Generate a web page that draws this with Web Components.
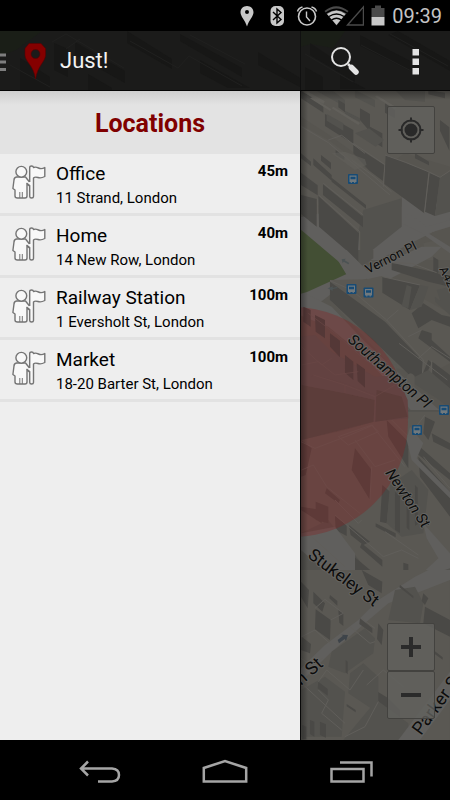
<!DOCTYPE html>
<html lang="en">
<head>
<meta charset="utf-8">
<meta name="viewport" content="width=device-width, initial-scale=1">
<title>Just!</title>
<style>
    body {
        margin: 0;
        background: #000;
        color: #000;
        font-family: Roboto, "Noto Sans", sans-serif;
    }
</style>
</head>
<body>
<just-app></just-app>

<script>
class StatusBar extends HTMLElement {
    constructor() {
        super();
        this.attachShadow({ mode: "open" });
    }

    connectedCallback() {
        this.shadowRoot.innerHTML = `
            <style>
                :host {
                    display: flex;
                    justify-content: flex-end;
                    align-items: center;
                    gap: 6px;
                    height: 31px;
                    padding-right: 8px;
                    background: #000;
                    color: #c4c4c4;
                    font-size: 20px;
                    line-height: 32px;
                }
                svg { flex: none; }
            </style>
            <svg width="24" height="24" viewBox="0 0 24 24"><path fill="#c8c8c8" fill-rule="evenodd" d="M13 2C9.200 2 6.500 4.800 6.500 8.300C6.500 12.500 11 16 13 22.500C15 16 19.500 12.500 19.500 8.300C19.500 4.800 16.800 2 13 2ZM13 6a2 2 0 1 1 0 4a2 2 0 0 1 0-4Z"/></svg>
            <svg width="24" height="24" viewBox="0 0 24 24"><rect x="6.500" y="2" width="13.500" height="20" rx="5" fill="#c8c8c8"/><path fill="none" stroke="#000" stroke-width="1.400" d="M9 8l8 7.500l-4 3.500V5l4 3.500L9 16"/></svg>
            <svg width="24" height="24" viewBox="0 0 24 24"><g fill="none" stroke="#c8c8c8" stroke-width="1.600"><circle cx="13" cy="12.500" r="8.500"/><path d="M12.500 7.500v5.500l3.500 4" stroke-width="1.400"/><path d="M3.500 7.500Q4.500 4 8.500 3M22.500 7.500Q21.500 4 17.500 3" stroke-width="1.500"/></g></svg>
            <svg width="40" height="24" viewBox="0 0 40 24"><path fill="#4a4a4a" d="M.5 7Q12-2.500 24.500 7L12.500 21.500Z"/><path fill="#c8c8c8" d="M3 10Q12.500 3 21.500 10L12.500 21Z"/><path fill="none" stroke="#000" stroke-width="1.400" d="M2 9Q12.500 1.500 23 9M5 12.500Q12.500 7.500 20 12.500M7.500 16Q12.500 12.500 17.500 16"/><path fill="#000" fill-opacity=".6" stroke="#4a4a4a" stroke-width="1.300" d="M23.500 21L39.400 3V21Z"/></svg>
            <svg width="16" height="24" viewBox="0 0 16 24"><path fill="#4a4a4a" d="M5 1.500h6v2.500h3.500v9H1.500V4H5Z"/><path fill="#c8c8c8" d="M1.500 13h13v8.500h-13Z"/></svg>
            <time>09:39</time>
        `;
    }
}
customElements.define("status-bar", StatusBar);


class ActionBar extends HTMLElement {
    constructor() {
        super();
        this.attachShadow({ mode: "open" });
    }

    connectedCallback() {
        this.shadowRoot.innerHTML = `
            <style>
                :host {
                    display: grid;
                    height: 60px;
                    background: #1b1b1a;
                    color: #f3f3f3;
                }
                .backdrop, .bar { grid-area: 1 / 1; }
                .backdrop {
                    width: 100%;
                    height: 60px;
                    min-width: 0;
                }
                .bar {
                    display: flex;
                    align-items: center;
                    gap: 23px;
                    padding-right: 10px;
                    box-sizing: border-box;
                    border-bottom: 1px solid #050505;
                }
                button {
                    display: flex;
                    align-items: center;
                    justify-content: center;
                    width: 48px;
                    height: 48px;
                    padding: 0;
                    border: 0;
                    background: none;
                    color: inherit;
                    font: inherit;
                }
                .home {
                    flex: 1;
                    justify-content: flex-start;
                    gap: 12px;
                    font-size: 22px;
                    line-height: 28px;
                }
            </style>
            <svg class="backdrop" viewBox="0 31 450 60" preserveAspectRatio="xMidYMid slice" aria-hidden="true">
                <path fill="#1a1f16" d="M0 31h42L16 50L0 56ZM300 31h45l-12 17l-22-4l-11 3Z" opacity=".8"/>
                <g fill="#171716">
                    <path d="M54 43l14 6v28l-14-7ZM75 42l50 29v12l-50-28ZM127 31l45 28v10l-45-26ZM180 34l62 34v9l-62-36ZM200 60l50 28h-22l-28-15ZM258 52l42 26v9l-42-22ZM20 58l30 19v13H20ZM88 74l24 14v3H88Z"/>
                    <path d="M310 43l45 30v9l-45-27ZM360 35l60 31v10l-60-30ZM340 75l26 14h-26ZM398 31l52 30v10l-62-36ZM305 67l18 10v14h-18Z"/>
                </g>
                <path fill="none" stroke="#20201f" d="M52 42l14-8l58 34M66 49l14-10M130 41l48 27l11-12l53 30M190 35l55 29M305 54l48 28M361 45l56 29M390 34l58 32M10 65l40 22"/>
                <path d="M300.500 31v60" stroke="#101010"/>
            </svg>
            <div class="bar">
                <button class="home">
                    <svg width="48" height="40" viewBox="0 0 48 40"><path fill="#7e7e7e" d="M0 12.500h6v3H0zM0 19.500h6v3H0zM0 27h6v3H0z"/><path fill="#850000" stroke="#5c0000" stroke-width=".6" fill-rule="evenodd" d="M29 2.500h12l4.500 5v7C45 21 37.500 25 35.500 38C34 25 25.500 21 25 14.500V7.500ZM35.500 8.500a4.500 4.500 0 1 0 0 9a4.500 4.500 0 0 0 0-9Z"/></svg>
                    <span>Just!</span>
                </button>
                <button aria-label="Search">
                    <svg width="30" height="30" viewBox="0 0 30 30"><circle cx="11" cy="11" r="9" fill="none" stroke="#e4e4e4" stroke-width="2"/><path d="M18 18l3 3" stroke="#e4e4e4" stroke-width="2.500"/><path d="M21.500 21.500l4.500 4.500" stroke="#e4e4e4" stroke-width="5.500" stroke-linecap="round"/></svg>
                </button>
                <button aria-label="More options">
                    <svg width="8" height="28" viewBox="0 0 8 28"><path fill="#e4e4e4" d="M.5 2H7v6.500H.500zM.5 11.500H7V18H.5zM.5 21H7v6.500H.5z"/></svg>
                </button>
            </div>
        `;
    }
}
customElements.define("action-bar", ActionBar);


class LocationItem extends HTMLElement {
    constructor() {
        super();
        this.attachShadow({ mode: "open" });
    }

    connectedCallback() {
        this.setAttribute("role", "listitem");
        this.shadowRoot.innerHTML = `
            <style>
                :host {
                    display: block;
                    border-bottom: 3px solid #e2e2e2;
                }
                button {
                    display: flex;
                    align-items: flex-start;
                    gap: 10px;
                    width: 100%;
                    padding: 8px 12px 3px;
                    border: 0;
                    background: none;
                    color: #000;
                    font: inherit;
                    text-align: left;
                }
                svg {
                    flex: none;
                    margin-top: 3px;
                }
                .text { flex: 1; }
                .name, .address { display: block; }
                .name {
                    font-size: 19px;
                    line-height: 24px;
                }
                .address {
                    font-size: 15px;
                    line-height: 24px;
                }
                .distance {
                    font-size: 15px;
                    font-weight: 700;
                    line-height: 18px;
                }
            </style>
            <button>
                <svg width="34" height="34" viewBox="0 0 34 34" aria-hidden="true">
                    <g fill="#f8f8f8" stroke="#747474" stroke-width="1.400" stroke-linejoin="round">
                        <path d="M4.500 12Q2 12.500 2 15L.9 23.500L3 25V31Q3 33 5.500 33H13Q15 33 15 31V19L17.500 21V17L13.500 12Z"/>
                        <path d="M7.800 33V27M10.300 33V27" fill="none" stroke-width="1"/>
                        <path d="M17.700 17V2.500Q17.700 1 19.500 1T21.500 2.500Q23.500 1.500 26.500 3T32.800 2.500V11.500Q29 13.500 26 12.500T21.500 13V31.500Q21.500 33 19.600 33T17.700 31.500V20.500L14.500 18"/>
                        <circle cx="9.300" cy="6.800" r="5.400"/>
                    </g>
                </svg>
                <span class="text">
                    <span class="name"><slot></slot></span>
                    <span class="address"><slot name="address"></slot></span>
                </span>
                <span class="distance"><slot name="distance"></slot></span>
            </button>
        `;
    }
}
customElements.define("location-item", LocationItem);


class LocationDrawer extends HTMLElement {
    constructor() {
        super();
        this.attachShadow({ mode: "open" });
    }

    connectedCallback() {
        this.shadowRoot.innerHTML = `
            <style>
                :host {
                    display: block;
                    background: #eee;
                    border-right: 1px solid #0a0a0a;
                }
                h1 {
                    margin: 0;
                    padding: 18px 0 15px;
                    background: linear-gradient(#cfcfcf, #e3e3e3 14px);
                    color: #800000;
                    font-size: 25px;
                    font-weight: 700;
                    line-height: 30px;
                    text-align: center;
                }
            </style>
            <h1>Locations</h1>
            <div role="list"><slot></slot></div>
        `;
    }
}
customElements.define("location-drawer", LocationDrawer);


class MapButton extends HTMLElement {
    constructor() {
        super();
        this.attachShadow({ mode: "open" });
    }

    connectedCallback() {
        this.shadowRoot.innerHTML = `
            <style>
                :host { display: block; }
                button {
                    display: grid;
                    place-items: center;
                    box-sizing: border-box;
                    width: 48px;
                    height: 48px;
                    padding: 0;
                    border: 1px solid #43423f;
                    border-radius: 2px;
                    background: rgba(98, 97, 94, 0.8);
                }
            </style>
            <button aria-label="${this.getAttribute("label")}"><slot></slot></button>
        `;
    }
}
customElements.define("map-button", MapButton);


class CityMap extends HTMLElement {
    constructor() {
        super();
        this.attachShadow({ mode: "open" });
    }

    connectedCallback() {
        this.shadowRoot.innerHTML = `
            <style>
                :host {
                    display: block;
                    position: relative;
                    overflow: hidden;
                    background: #575550;
                }
                .map {
                    position: absolute;
                    width: 100%;
                    height: 100%;
                }
                .labels {
                    fill: #0c0c0c;
                    stroke: #656461;
                    stroke-width: 2px;
                    stroke-linejoin: round;
                    paint-order: stroke;
                }
                .locate, .zoom {
                    position: absolute;
                    right: 15px;
                }
                .locate { top: 15px; }
                .zoom {
                    bottom: 21px;
                    display: grid;
                }
                .road { fill: #605f5d; }
                .top { fill: #5a5853; }
                .wall { fill: #4a4946; }
                .side { fill: #53524e; }
                .lines {
                    fill: none;
                    stroke: #605e5a;
                    stroke-width: 3px;
                }
            </style>
            <svg class="map" viewBox="300 91 150 649" preserveAspectRatio="xMidYMid slice" role="img" aria-label="Map">
                <defs>
                    <g id="bus">
                        <rect x="-5" y="-5" width="10" height="10" rx="1" fill="#174b75"/>
                        <path fill="#71797d" fill-rule="evenodd" d="M-3.500-3.500h7v6.500h-1.200v1h-1.200v-1h-2.200v1h-1.200v-1h-1.200ZM-2.500-2.300v2.500h5v-2.500Z"/>
                    </g>
                    <linearGradient id="edge"><stop stop-opacity=".35"/><stop offset="1" stop-opacity="0"/></linearGradient>
                    <linearGradient id="under" x2="0" y2="1"><stop stop-opacity=".3"/><stop offset="1" stop-opacity="0"/></linearGradient>
                </defs>

                <!-- northern blocks -->
                <g transform="translate(295 90) scale(.33333)">
                    <path class="road" d="M0 385L120 510H250L465 400V350L330 320Z"/>
                    <path class="top" d="M0 0h465v230L330 190L270 230L215 215L95 130L18 80Z"/>
                    <path class="side" d="M60 0L110 0L150 30V50ZM180 0l60 30v22L180 22ZM300 0h90v35L330 30Z"/>
                    <path class="wall" d="M18 2L85 42V68L18 25ZM90 72L175 120V162L90 108ZM175 165L268 225L262 285L175 190ZM225 110L262 130V172L225 150ZM195 55L225 72V125L195 90ZM270 40L300 60V85L270 68ZM130 30l20 12v25l-20-15ZM400 0l50 8v17l-50-12ZM435 90l28 22v70l-28-60Z"/>
                    <path class="side" d="M95 72L145 100V122L95 92ZM150 62L195 85V95L150 75ZM180 130l42-15l45 35l-25 20Z"/>
                    <path fill="#615f5a" d="M18 2L85 42l5-8L30 0ZM45 25l60 38l4-5L52 22ZM110 55l80 50l5-6L115 50ZM240 20l60 38l4-6L246 16Z"/>
                    <path class="top" d="M18 105L100 150L320 315V350L215 375L205 440L18 310Z"/>
                    <path class="side" d="M320 325V410L195 510L190 425L205 360Z"/>
                    <path class="wall" d="M78 195L108 218V238L78 212ZM122 180l26 20v10l-26-16ZM55 205L110 255V272L55 225ZM18 190L48 215V228L18 205ZM110 263L213 345V356L110 275ZM84 283L204 380V412L84 315ZM18 248L68 286V316L18 285ZM18 315L65 327V410L18 372ZM70 318L192 430L188 510L72 410Z"/>
                    <path class="lines" d="M20 110L100 158L285 315M85 280L205 375M72 316L194 425V510M68 325V410M170 210l70 52l50 44M175 160L270 224L265 290M100 150l40-14l70 54"/>
                    <path fill="#615f5a" d="M210 208L215 225L180 240L110 190L150 185Z" opacity=".6"/>
                    <path class="wall" d="M272 195L325 215L400 245L388 370L268 282ZM404 250L435 262L420 378L390 365ZM360 190L402 215V226L360 205Z"/>
                    <path class="side" d="M435 262L465 245V365L420 378Z"/>
                    <path class="lines" d="M270 195Q330 215 400 245L435 262L465 242M402 250L388 370"/>
                    <path class="top" d="M385 460l40-10l40 35v25h-70Z"/>
                    <path class="road" d="M340 370L395 410L465 390V410L400 430L465 470V490L380 430L320 400Z"/>
                </g>

                <!-- park and the blocks round it -->
                <path class="road" d="M300 220l60 52l-46 35l-14 5Z"/>
                <path fill="#434f34" d="M300 229L351 272L307 292L300 294Z"/>
                <g transform="translate(295 250) scale(.33333)">
                    <path class="side" d="M150 0h85v25l-70 45Z"/>
                    <path class="wall" d="M150 0h40v35Z"/>
                    <path class="road" d="M110 0h45L235 80L170 100ZM200 70L380-10H440L410 20L240 110Z"/>
                    <path class="top" d="M105 90L215 88L260 78L465 190V340L390 380L290 350L105 150Z"/>
                    <path class="wall" d="M105 95L270 215L385 335L380 410L265 300L105 150ZM262 80L375 105L345 180L262 128ZM290 38L425 68L465 90V110L400 95L290 60ZM350 190L385 160L440 195L465 200V230L410 210L370 235ZM380 240L410 250V270L465 320V335L370 265Z"/>
                    <path class="side" d="M375 105L400 110L380 170L345 180ZM425 120L465 110V175L440 165ZM420 140L465 175V195L420 155ZM335 105L350 110L340 175L320 168Z"/>
                    <path class="wall" d="M412 335L465 375V430L405 405ZM400 330L410 338L390 380L382 375ZM415 20l15 10v38h-15Z"/>
                    <path class="lines" d="M105 92L170 120L275 210L385 330L380 405M262 80L375 105M290 38L350 40L425 68M312 280l145 110M370 325L410 290L465 325M410 332V405M275 210L310 180M340 260L380 240"/>
                    <path class="road" d="M0 150L30 130L110 170L210 275L345 400L465 510H370L300 420L210 320L100 230L0 190Z"/>
                    <path class="side" d="M340 390l60-30l65 55v60l-40-30Z"/>
                    <path class="top" d="M335 378q12-16 24 0v35h-24ZM270 340l35 5v30Z"/>
                    <path fill="#4c5354" d="M140 28l12-2l-3 5l14 8l-3 4l-14-8l-3 5ZM98 115l16-6l-1 5l14-4v4l-14 4v5Z"/>
                </g>

                <!-- southern blocks -->
                <g transform="translate(295 410) scale(.33333)">
                    <path class="side" d="M0 30L340 0H465v510H0Z"/>
                    <path class="top" d="M18 90L150 60L235 35L300 5H465V440L380 500H230L100 330L18 370Z"/>
                    <path class="wall" d="M18 90L50 115L32 195L18 200ZM180 115L230 180L225 270L170 180ZM275 30L340 95V175L280 80ZM390 20L420 35L400 90L385 70ZM370 140L465 245V320L375 200ZM410 70L465 100V120L415 95ZM262 225L285 245L275 340L255 335ZM340 80l125 110v20L340 110Z"/>
                    <path class="road" d="M345 50L385 100L365 145L465 245V265L350 150L335 90Z"/>
                    <path class="side" d="M285 225L350 180L400 240L385 370L320 380L275 340Z"/>
                    <path class="wall" d="M300 245l15 14v110l-15-10ZM335 245l8 6v110l-8-8ZM360 225l8 8v110l-8 4Z"/>
                    <path class="wall" d="M18 290L80 300V340L18 300ZM62 275L100 290V340L62 330ZM120 318L155 345V378L122 360ZM162 345L225 395L205 405L167 375ZM200 400L262 450V470L195 412ZM165 430L250 500V510H160ZM95 235l40 35l-5 10l-40-30ZM325 458l15 5v40l-15-10ZM242 340l60 30v12l-60-32Z"/>
                    <path class="road" d="M385 340L465 430V475L360 510L430 445L395 385ZM18 370L120 350L180 430V510H120L18 420Z"/>
                    <path class="lines" d="M18 95L60 115L165 75L235 45M130 80l100-35l20 20l-90 40ZM180 90l60 80l60-20M230 170L225 270M230 45L330 170M120 315L265 440L320 420L370 445M120 270l70 70l10-10M20 180l35-15l40 65l100 80M280 20l60 60l50-65M385 140l80 95M50 380l100 90M270 365l100 70"/>
                </g>
                <g transform="translate(295 570) scale(.33333)">
                    <path class="top" d="M0 0h465v510H0Z"/>
                    <path class="wall" d="M200 0L262 35L260 70L220 45ZM62 118L107 150L105 210L60 178ZM18 35L42 60L38 115L18 80ZM55 65L90 100L82 125L55 100ZM20 200L48 222L45 250L18 240ZM390 110L465 150V200L385 160ZM105 75l22 18v14l-24-22ZM130 120l15 10v38l-12-10Z"/>
                    <path class="road" d="M465 0V30L375 65L280 100L215 155L105 250L18 335V295L90 225L190 150L250 90L360 20L400 0Z"/>
                    <path class="side" d="M110 245L210 175L240 205L235 250L150 310L100 290ZM18 360L90 320L150 365L140 500H18ZM300 60L360 50L385 100L375 160L280 150Z"/>
                    <path class="wall" d="M195 145L232 175V190L193 162ZM215 345L280 385L315 420V455L218 385ZM250 160l15 20l-5 45l-14-18ZM315 45L355 78V85L313 52ZM385 70l15 15l-10 20l-10-12ZM70 335l28 22v20l-30-22ZM155 402l27 18v7l-27-18ZM152 270l6 5v38l-6-6ZM75 455l18 8v40l-18-8ZM45 450l13 5v45l-13-8ZM22 465l12 5v38H22ZM415 240l28 22v7l-28-20Z"/>
                    <path class="side" d="M145 510L245 390L340 460V510ZM165 310L205 280L250 320V430L160 370Z"/>
                    <path class="lines" d="M60 115L90 88L145 130L107 150M20 200l40-20l50 45M18 265l30 20l35-20M70 335l25-35l70 60l40-60M215 345l50-45l60 50M250 395L210 470L150 500M165 170l60 50l15-5M200 145l40 30M20 340l130 120M70 360l30 30l-20 40l60 50"/>
                    <path fill="#3e444a" d="M128 210l16-13l-5-3l20 1l-6 18l-4-6l-17 13Z"/>
                    <path class="road" d="M310 510L465 305V390L375 510Z"/>
                </g>

                <circle cx="293" cy="422" r="115" fill="#8a1c1c" fill-opacity=".32"/>
                <!-- block edges inside the alert zone -->
                <g transform="translate(295 250) scale(.33333)">
                    <path fill="#634241" d="M18 260L60 255L110 305L240 380L305 375L338 450L340 505L235 515L18 570Z"/>
                    <path fill="#5c3d3a" d="M245 420L320 440L338 500L240 515ZM20 405L150 430L240 450L235 515L18 570Z"/>
                    <path fill="#543837" d="M25 170l22 10v50l-22-15ZM60 195l30 15v55l-28-20ZM105 250l30 22v50l-30-32ZM150 315l25 20v55l-25-22ZM185 340l25 18v55l-22-20Z"/>
                    <path fill="#634241" d="M20 405L55 375L150 400L150 430ZM150 400l90 35v15l-90-20Z"/>
                    <path fill="none" stroke="#694745" stroke-width="2" d="M40 190l80 60l90 80l90 55M20 290l60 55l30-20M20 345l50-10l50 40l70-10M55 375l95 30l90 35l60-35M150 405v25M240 440v75"/>
                </g>

                <use href="#bus" x="353" y="179"/>
                <use href="#bus" x="351.500" y="289"/>
                <use href="#bus" x="368.500" y="292.500"/>
                <use href="#bus" x="444" y="410"/>
                <use href="#bus" x="417" y="430"/>

                <g class="labels">
                    <text transform="translate(368 274) rotate(-27)" font-size="13">Vernon Pl</text>
                    <text transform="translate(439 269) rotate(64)" font-size="12">A428</text>
                    <text transform="translate(347 341) rotate(41)" font-size="15" font-style="italic">Southampton Pl</text>
                    <text transform="translate(385 473) rotate(56)" font-size="15" font-style="italic">Newton St</text>
                    <text transform="translate(307 557) rotate(37)" font-size="17">Stukeley St</text>
                    <text transform="translate(301 686) rotate(-42)" font-size="18">n St</text>
                    <text transform="translate(421 736) rotate(-54)" font-size="18">Parker S</text>
                </g>

                <rect x="300" y="91" width="8" height="649" fill="url(#edge)"/>
                <rect x="300" y="91" width="150" height="9" fill="url(#under)"/>
            </svg>

            <map-button class="locate" label="My location">
                <svg width="26" height="26" viewBox="0 0 26 26"><circle cx="13" cy="13" r="9.500" fill="none" stroke="#292929" stroke-width="2"/><circle cx="13" cy="13" r="6.500" fill="#292929"/><path stroke="#292929" stroke-width="2" d="M13 .5v4M13 21.500v4M.5 13h4M21.500 13h4"/></svg>
            </map-button>
            <div class="zoom">
                <map-button label="Zoom in"><svg width="22" height="22" viewBox="0 0 22 22"><path stroke="#2b2b2b" stroke-width="4" d="M11 1v20M1 11h20"/></svg></map-button>
                <map-button label="Zoom out"><svg width="22" height="22" viewBox="0 0 22 22"><path stroke="#2b2b2b" stroke-width="4" d="M1 11h20"/></svg></map-button>
            </div>
        `;
    }
}
customElements.define("city-map", CityMap);


class SystemNav extends HTMLElement {
    constructor() {
        super();
        this.attachShadow({ mode: "open" });
    }

    connectedCallback() {
        this.shadowRoot.innerHTML = `
            <style>
                :host {
                    display: flex;
                    height: 60px;
                    padding: 0 36px;
                    background: #000;
                }
                button {
                    flex: 1;
                    display: grid;
                    place-items: center;
                    padding: 0;
                    border: 0;
                    background: none;
                }
                svg {
                    fill: none;
                    stroke: #a5a5a5;
                    stroke-width: 2.5;
                }
            </style>
            <button aria-label="Back"><svg width="48" height="48" viewBox="0 0 48 48"><path d="M13 15.500L6 22.500L13 29.500M6 22.500H37Q44 23 44 29T37 35.500H23"/></svg></button>
            <button aria-label="Home"><svg width="48" height="48" viewBox="0 0 48 48"><path d="M2.800 35.500V22L24 15L45.200 22V35.500Z"/></svg></button>
            <button aria-label="Recent apps"><svg width="48" height="48" viewBox="0 0 48 48"><path d="M4.500 23H36.500V35.500H4.500ZM13 16.500H44.500V30.500"/></svg></button>
        `;
    }
}
customElements.define("system-nav", SystemNav);


class JustApp extends HTMLElement {
    constructor() {
        super();
        this.attachShadow({ mode: "open" });
    }

    connectedCallback() {
        this.shadowRoot.innerHTML = `
            <style>
                :host {
                    display: flex;
                    flex-direction: column;
                    min-height: 100vh;
                }
                main {
                    flex: 1;
                    display: grid;
                    grid-template-columns: 2fr 1fr;
                }
                location-drawer { margin-right: -1px; z-index: 1; }
            </style>
            <status-bar></status-bar>
            <action-bar></action-bar>
            <main>
                <location-drawer>
                    <location-item>Office<span slot="address">11 Strand, London</span><span slot="distance">45m</span></location-item>
                    <location-item>Home<span slot="address">14 New Row, London</span><span slot="distance">40m</span></location-item>
                    <location-item>Railway Station<span slot="address">1 Eversholt St, London</span><span slot="distance">100m</span></location-item>
                    <location-item>Market<span slot="address">18-20 Barter St, London</span><span slot="distance">100m</span></location-item>
                </location-drawer>
                <city-map></city-map>
            </main>
            <system-nav></system-nav>
        `;
    }
}
customElements.define("just-app", JustApp);
</script>
</body>
</html>
